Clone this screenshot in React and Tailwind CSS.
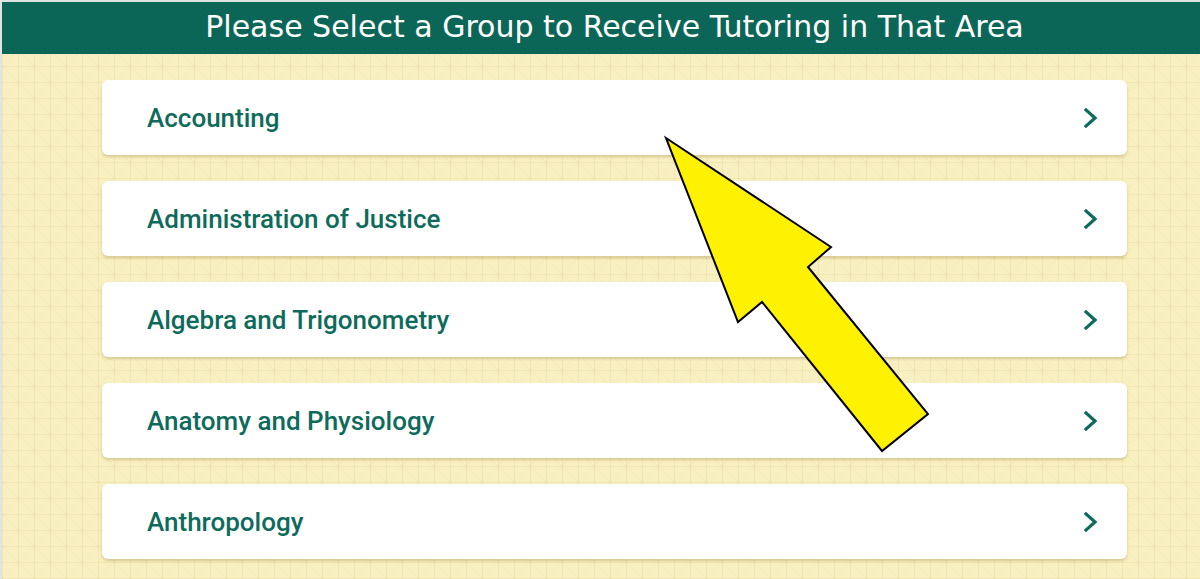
import React from "react";

const items = [
  "Accounting",
  "Administration of Justice",
  "Algebra and Trigonometry",
  "Anatomy and Physiology",
  "Anthropology",
];

function Chevron() {
  return (
    <svg width="14" height="20" viewBox="0 0 14 20" className="text-[#0e6b5c]">
      <polyline
        points="2,2 11,10 2,18"
        fill="none"
        stroke="currentColor"
        strokeWidth="3.2"
        strokeLinecap="square"
        strokeLinejoin="miter"
      />
    </svg>
  );
}

export default function App() {
  return (
    <div className="relative w-[1200px] h-[579px] overflow-hidden bg-[#f9f0c1] bg-[linear-gradient(rgba(200,180,100,0.15)_1px,transparent_1px),linear-gradient(90deg,rgba(200,180,100,0.15)_1px,transparent_1px),linear-gradient(45deg,transparent_49%,rgba(200,180,100,0.12)_49%,rgba(200,180,100,0.12)_51%,transparent_51%),linear-gradient(-45deg,transparent_49%,rgba(200,180,100,0.12)_49%,rgba(200,180,100,0.12)_51%,transparent_51%)] bg-[length:16px_16px,16px_16px,32px_32px,32px_32px] border-l-2 border-t-2 border-[#dfe6e2]">
      <div className="h-[52px] bg-[#0b6657] flex items-center">
        <div className="ml-[100px] w-[1025px] text-center text-white text-[30px] leading-none font-['DejaVu_Sans',sans-serif] pb-[3px]">
          Please Select a Group to Receive Tutoring in That Area
        </div>
      </div>
      <div className="ml-[100px] w-[1025px] pt-[26px] flex flex-col gap-[26px]">
        {items.map((t) => (
          <div
            key={t}
            className="h-[75px] bg-white rounded-[6px] shadow-[0_2px_3px_rgba(150,130,60,0.35)] flex items-center justify-between pl-[45px] pr-[29px]"
          >
            <span className="text-[26px] font-medium text-[#0e6b5c] font-['Roboto',sans-serif] pt-[2px]">
              {t}
            </span>
            <Chevron />
          </div>
        ))}
      </div>
      <svg
        className="absolute left-0 top-0 pointer-events-none"
        width="1200"
        height="579"
        viewBox="0 0 1200 579"
      >
        <polygon
          points="664,136 829,245 806,265 926,412 880,449 760,300 736,320"
          fill="#fff200"
          stroke="#000"
          strokeWidth="2"
          strokeLinejoin="miter"
        />
      </svg>
    </div>
  );
}
